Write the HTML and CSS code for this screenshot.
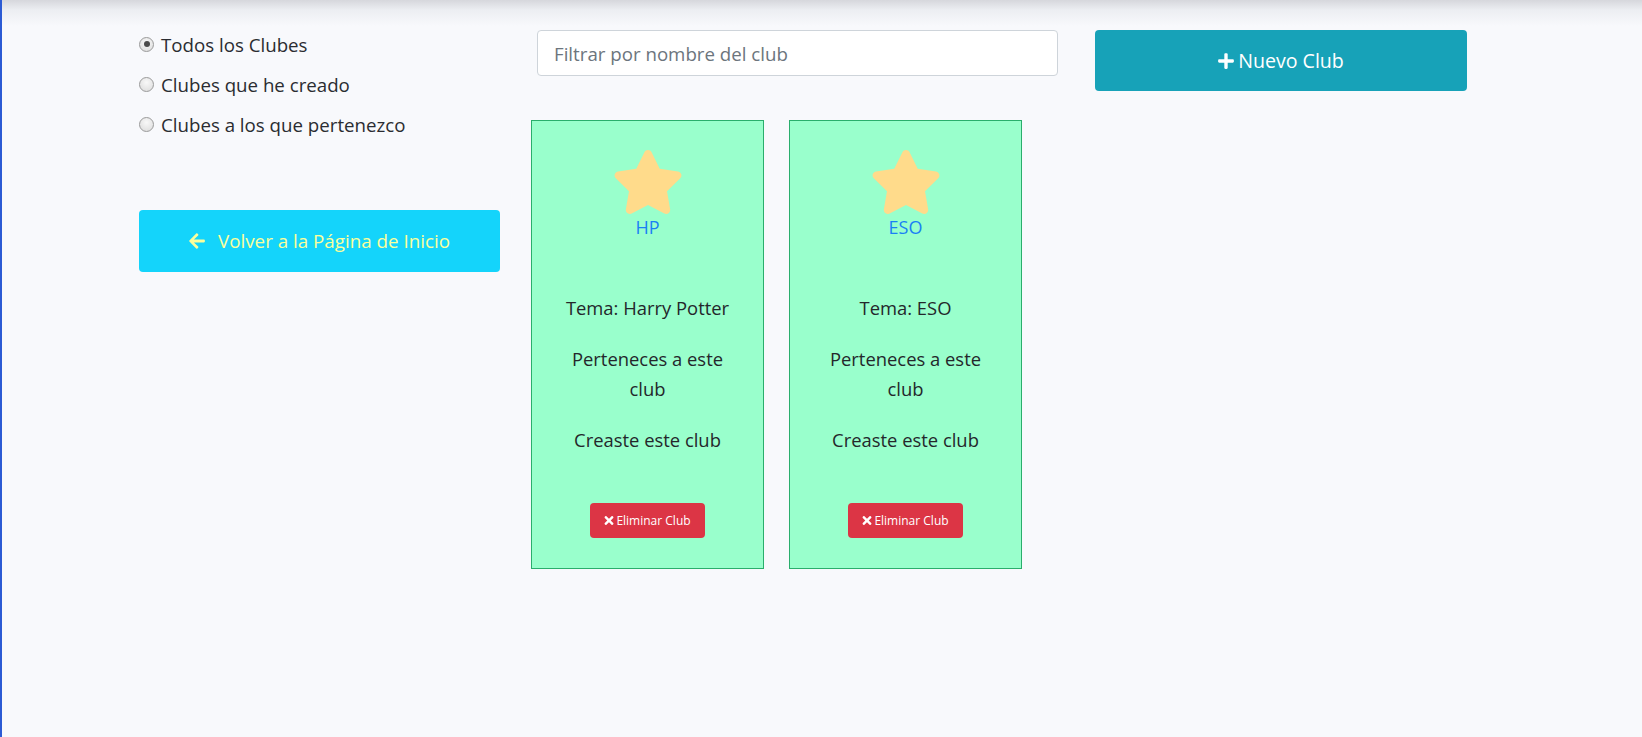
FILE: index.html
```html
<!DOCTYPE html>
<html lang="es">
<head>
<meta charset="utf-8">
<title>Clubes</title>
<link rel="stylesheet" href="styles.css">
</head>
<body>
<div class="page">
  <aside class="col-left">
    <div class="filters">
      <label class="radio-row"><span class="radio checked"></span>Todos los Clubes</label>
      <label class="radio-row"><span class="radio"></span>Clubes que he creado</label>
      <label class="radio-row"><span class="radio"></span>Clubes a los que pertenezco</label>
    </div>
    <a class="btn-back" href="#">
      <svg class="ico-arrow" viewBox="0 0 448 512"><path d="M257.5 445.1l-22.2 22.2c-9.4 9.4-24.6 9.4-33.9 0L7 273c-9.4-9.4-9.4-24.6 0-33.9L201.4 44.7c9.4-9.4 24.6-9.4 33.9 0l22.2 22.2c9.5 9.5 9.3 25-.4 34.3L136.6 216H424c13.3 0 24 10.7 24 24v32c0 13.3-10.7 24-24 24H136.6l120.5 114.8c9.8 9.3 10 24.8.4 34.3z"/></svg>
      <span>Volver a la Página de Inicio</span>
    </a>
  </aside>

  <main class="col-mid">
    <input class="filter" type="text" placeholder="Filtrar por nombre del club">
    <div class="cards">
      <div class="card">
        <svg class="star" viewBox="0 0 576 512"><path d="M259.3 17.8L194 150.2 47.9 171.5c-26.2 3.8-36.7 36.1-17.7 54.6l105.7 103-25 145.5c-4.5 26.3 23.2 46 46.4 33.7L288 439.6l130.7 68.7c23.2 12.2 50.9-7.4 46.4-33.7l-25-145.5 105.7-103c19-18.5 8.5-50.8-17.7-54.6L382 150.2 316.7 17.8c-11.7-23.6-45.6-23.9-57.4 0z"/></svg>
        <a class="club-name" href="#">HP</a>
        <div class="info">
          <p>Tema: Harry Potter</p>
          <p>Perteneces a este club</p>
          <p>Creaste este club</p>
        </div>
        <button class="btn-del"><svg class="ico-x" viewBox="0 0 352 512"><path d="M242.72 256l100.07-100.07c12.28-12.28 12.28-32.19 0-44.48l-22.24-22.24c-12.28-12.28-32.19-12.28-44.48 0L176 189.28 75.93 89.21c-12.28-12.28-32.19-12.28-44.48 0L9.21 111.45c-12.28 12.28-12.28 32.19 0 44.48L109.28 256 9.21 356.07c-12.28 12.28-12.28 32.19 0 44.48l22.24 22.24c12.28 12.28 32.2 12.28 44.48 0L176 322.72l100.07 100.07c12.28 12.28 32.2 12.28 44.48 0l22.24-22.24c12.28-12.28 12.28-32.19 0-44.48L242.72 256z"/></svg>Eliminar Club</button>
      </div>
      <div class="card">
        <svg class="star" viewBox="0 0 576 512"><path d="M259.3 17.8L194 150.2 47.9 171.5c-26.2 3.8-36.7 36.1-17.7 54.6l105.7 103-25 145.5c-4.5 26.3 23.2 46 46.4 33.7L288 439.6l130.7 68.7c23.2 12.2 50.9-7.4 46.4-33.7l-25-145.5 105.7-103c19-18.5 8.5-50.8-17.7-54.6L382 150.2 316.7 17.8c-11.7-23.6-45.6-23.9-57.4 0z"/></svg>
        <a class="club-name" href="#">ESO</a>
        <div class="info">
          <p>Tema: ESO</p>
          <p>Perteneces a este club</p>
          <p>Creaste este club</p>
        </div>
        <button class="btn-del"><svg class="ico-x" viewBox="0 0 352 512"><path d="M242.72 256l100.07-100.07c12.28-12.28 12.28-32.19 0-44.48l-22.24-22.24c-12.28-12.28-32.19-12.28-44.48 0L176 189.28 75.93 89.21c-12.28-12.28-32.19-12.28-44.48 0L9.21 111.45c-12.28 12.28-12.28 32.19 0 44.48L109.28 256 9.21 356.07c-12.28 12.28-12.28 32.19 0 44.48l22.24 22.24c12.28 12.28 32.2 12.28 44.48 0L176 322.72l100.07 100.07c12.28 12.28 32.2 12.28 44.48 0l22.24-22.24c12.28-12.28 12.28-32.19 0-44.48L242.72 256z"/></svg>Eliminar Club</button>
      </div>
    </div>
  </main>

  <div class="col-right">
    <button class="btn-new"><svg class="ico-plus" viewBox="0 0 448 512"><path d="M416 208H272V64c0-17.67-14.33-32-32-32h-32c-17.67 0-32 14.33-32 32v144H32c-17.67 0-32 14.33-32 32v32c0 17.67 14.33 32 32 32h144v144c0 17.67 14.33 32 32 32h32c17.67 0 32-14.33 32-32V304h144c17.67 0 32-14.33 32-32v-32c0-17.67-14.33-32-32-32z"/></svg>Nuevo Club</button>
  </div>
</div>
</body>
</html>
```

FILE: styles.css
```css
html, body {
  margin: 0;
  height: 100%;
}

body {
  background: linear-gradient(to bottom, #d6d7dc 0px, #eceef2 10px, #f8f9fc 26px) no-repeat, #f8f9fc;
  border-left: 2px solid #2c5bd4;
  font-family: "Open Sans", "Noto Sans", sans-serif;
  color: #24272b;
  box-sizing: border-box;
  min-height: 737px;
}

.page {
  display: flex;
  align-items: flex-start;
  padding-left: 137px;
  gap: 37px;
}

/* left column */
.col-left {
  width: 361px;
  flex: none;
  padding-top: 24px;
}

.filters {
  display: flex;
  flex-direction: column;
}

.radio-row {
  display: flex;
  align-items: center;
  height: 40px;
  font-size: 18.7px;
  color: #2a2c31;
}

.radio {
  width: 15px;
  height: 15px;
  border-radius: 50%;
  box-sizing: border-box;
  border: 1px solid #9a9a9a;
  background: radial-gradient(circle at 50% 35%, #f8f8f8 0%, #dadada 100%);
  margin-right: 7px;
  display: flex;
  align-items: center;
  justify-content: center;
  flex: none;
}

.radio.checked::after {
  content: "";
  width: 6px;
  height: 6px;
  border-radius: 50%;
  background: #4a4a4a;
}

.btn-back {
  margin-top: 66px;
  height: 62px;
  border-radius: 4px;
  background: #14d4fb;
  color: #fbff9c;
  text-decoration: none;
  display: flex;
  align-items: center;
  justify-content: center;
  gap: 13px;
  font-size: 18.8px;
}

.ico-arrow {
  width: 16px;
  height: 18px;
  fill: #fbff9c;
}

/* middle column */
.col-mid {
  width: 521px;
  flex: none;
  padding-top: 30px;
}

.filter {
  display: block;
  width: 100%;
  height: 46px;
  box-sizing: border-box;
  border: 1px solid #ced4da;
  border-radius: 4px;
  background: #fff;
  padding: 0 16px;
  font-family: "Open Sans", "Noto Sans", sans-serif;
  font-size: 18.7px;
  color: #495057;
  outline: none;
}

.filter::placeholder {
  color: #6c757d;
}

.cards {
  display: flex;
  gap: 25px;
  margin-top: 44px;
  margin-left: -6px;
}

.card {
  width: 233px;
  height: 449px;
  box-sizing: border-box;
  background: #99ffcc;
  border: 1px solid #2aae6c;
  display: flex;
  flex-direction: column;
  align-items: center;
  padding-top: 29px;
}

.star {
  width: 72px;
  height: 64px;
  fill: #ffdb8b;
  display: block;
}

.club-name {
  color: #1a7ff5;
  text-decoration: none;
  font-size: 18px;
  line-height: 27px;
  margin-top: 0;
}

.info {
  margin-top: 52px;
  text-align: center;
  font-size: 18.4px;
  line-height: 30px;
  width: 170px;
}

.info p {
  margin: 0 0 21px;
}

.info p:last-child {
  margin-bottom: 0;
}

.btn-del {
  margin-top: 48px;
  width: 115px;
  height: 35px;
  border: none;
  border-radius: 4px;
  background: #dc3545;
  color: #fff;
  font-family: "Open Sans", "Noto Sans", sans-serif;
  font-size: 12px;
  display: flex;
  align-items: center;
  justify-content: center;
  gap: 2px;
  padding: 0;
}

.ico-x {
  width: 10px;
  height: 13px;
  fill: #fff;
}

/* right column */
.col-right {
  width: 372px;
  flex: none;
  padding-top: 30px;
}

.btn-new {
  width: 100%;
  height: 61px;
  border: none;
  border-radius: 4px;
  background: #17a2b8;
  color: #fff;
  font-family: "Open Sans", "Noto Sans", sans-serif;
  font-size: 19.6px;
  display: flex;
  align-items: center;
  justify-content: center;
  gap: 4px;
  padding: 0;
}

.ico-plus {
  width: 16px;
  height: 18px;
  fill: #fff;
}
```
